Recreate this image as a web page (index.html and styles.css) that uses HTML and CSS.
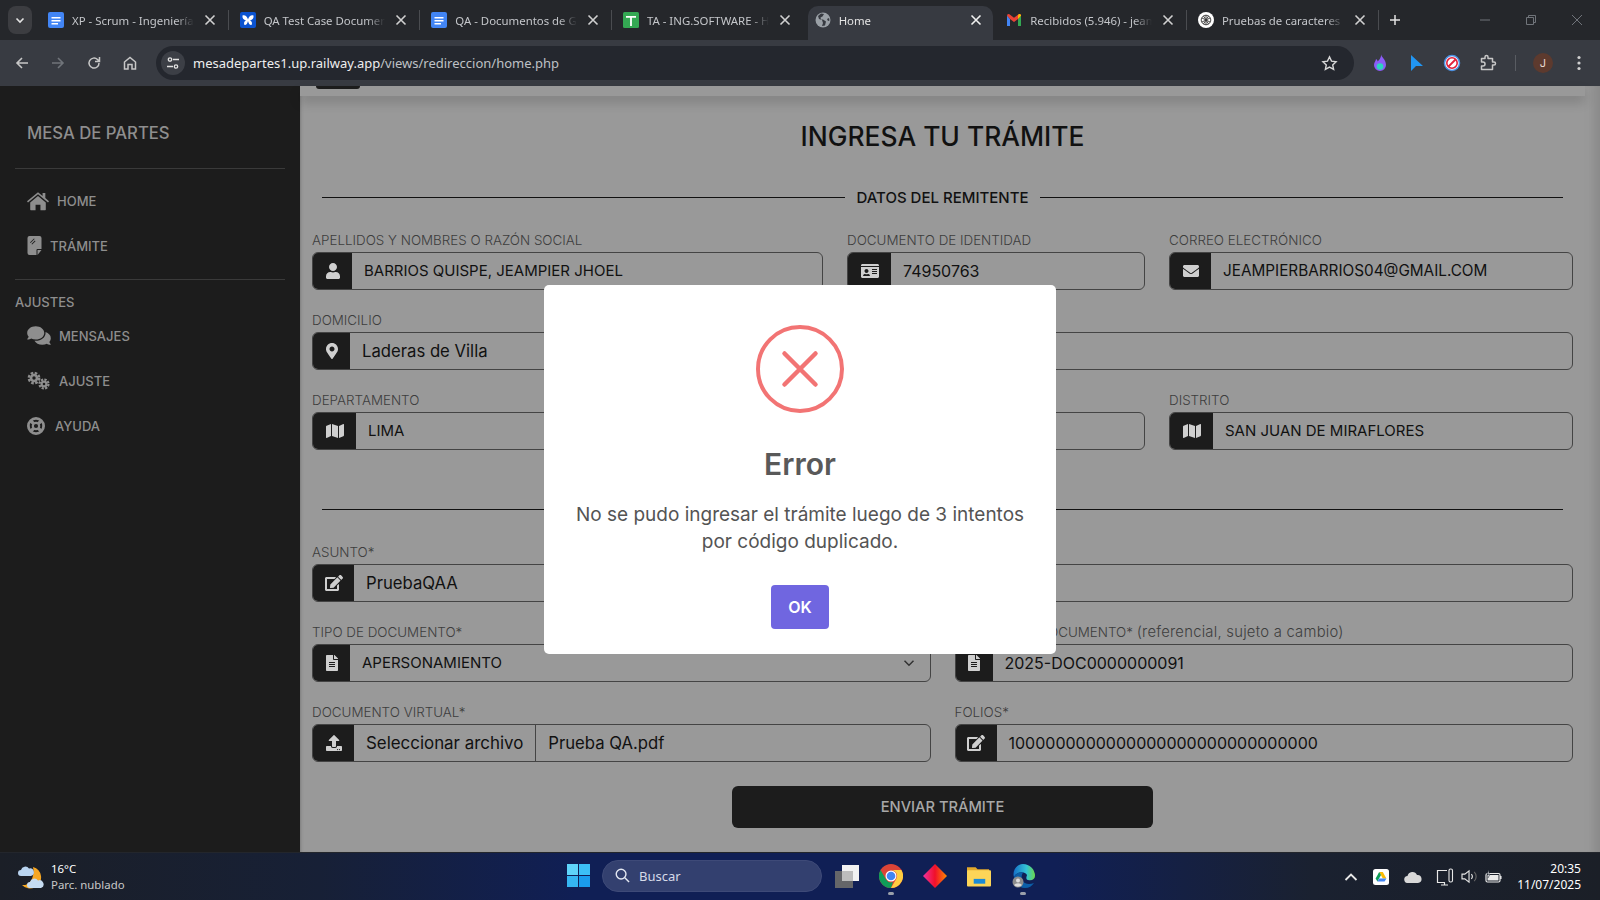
FILE: index.html
```html
<!DOCTYPE html>
<html lang="es">
<head>
<meta charset="utf-8">
<title>Home</title>
<link rel="stylesheet" href="styles.css">
</head>
<body>
<svg class="sprite" aria-hidden="true">
  <symbol id="i-home" viewBox="0 0 576 512"><path d="M288 24L408 122V44h72v136l96 82-26 30-262-216L26 292 0 262zM84 292L288 122l204 170v188a16 16 0 0 1-16 16H352V352H224v144H100a16 16 0 0 1-16-16z"/></symbol>
  <symbol id="i-note" viewBox="0 0 14 19"><path fill-rule="evenodd" d="M2 0h10a2 2 0 0 1 2 2v11h-4a1 1 0 0 0-1 1v5H2a2 2 0 0 1-2-2V2a2 2 0 0 1 2-2zM2.5 6.500l.6.6 4-4-.6-.6zM4 8l.6.6 3.400-3.400-.6-.6z"/><path d="M14 14l-4 5v-5z"/></symbol>
  <symbol id="i-comments" viewBox="0 0 576 512"><path d="M416 192c0-88.400-93.100-160-208-160S0 103.600 0 192c0 34.300 14.100 65.900 38 92-13.400 30.200-35.500 54.200-35.800 54.500-2.200 2.300-2.800 5.700-1.500 8.700S4.800 352 8 352c36.600 0 66.900-12.300 88.700-25 32.200 15.700 70.300 25 111.300 25 114.900 0 208-71.600 208-160zm122 220c23.900-26 38-57.700 38-92 0-66.900-53.500-124.200-129.300-148.100.9 6.600 1.300 13.300 1.300 20.100 0 105.900-107.700 192-240 192-10.800 0-21.300-.8-31.700-1.900C207.800 439.600 281.800 480 368 480c41 0 79.100-9.200 111.300-25 21.800 12.700 52.100 25 88.700 25 3.200 0 6.100-1.900 7.300-4.800 1.300-2.900.7-6.300-1.500-8.700-.3-.3-22.400-24.200-35.800-54.500z"/></symbol>
  <symbol id="i-cogs" viewBox="0 0 23 19"><g fill="none" stroke="currentColor"><circle cx="7" cy="7" r="3" stroke-width="2.600"/><circle cx="7" cy="7" r="5.200" stroke-width="2.400" stroke-dasharray="2.600 1.500"/><circle cx="17" cy="13" r="2.400" stroke-width="2.200"/><circle cx="17" cy="13" r="4.500" stroke-width="2.200" stroke-dasharray="2.300 1.200"/></g></symbol>
  <symbol id="i-ring" viewBox="0 0 18 18"><g fill="none" stroke="currentColor"><circle cx="9" cy="9" r="7.600" stroke-width="2.800"/><circle cx="9" cy="9" r="3.200" stroke-width="2.200"/><path stroke-width="3.400" d="M3.600 3.600l3 3M14.400 3.600l-3 3M3.600 14.400l3-3M14.400 14.400l-3-3"/></g></symbol>
  <symbol id="i-user" viewBox="0 0 448 512"><path d="M224 256c70.700 0 128-57.300 128-128S294.700 0 224 0 96 57.300 96 128s57.300 128 128 128zm89.600 32h-16.700c-22.200 10.200-46.900 16-72.900 16s-50.600-5.800-72.900-16h-16.700C60.200 288 0 348.200 0 422.400V464c0 26.500 21.500 48 48 48h352c26.500 0 48-21.500 48-48v-41.600c0-74.200-60.200-134.400-134.400-134.400z"/></symbol>
  <symbol id="i-id" viewBox="0 0 576 512"><path d="M528 32H48C21.500 32 0 53.500 0 80v16h576V80c0-26.500-21.500-48-48-48zM0 432c0 26.500 21.500 48 48 48h480c26.500 0 48-21.500 48-48V128H0v304zm352-232c0-4.400 3.600-8 8-8h144c4.400 0 8 3.600 8 8v16c0 4.400-3.600 8-8 8H360c-4.400 0-8-3.600-8-8v-16zm0 64c0-4.400 3.600-8 8-8h144c4.400 0 8 3.600 8 8v16c0 4.400-3.600 8-8 8H360c-4.400 0-8-3.600-8-8v-16zm0 64c0-4.400 3.600-8 8-8h144c4.400 0 8 3.600 8 8v16c0 4.400-3.600 8-8 8H360c-4.400 0-8-3.600-8-8v-16zM176 192c35.300 0 64 28.700 64 64s-28.700 64-64 64-64-28.700-64-64 28.700-64 64-64zM67.100 396.200C75.500 370.500 99.600 352 128 352h8.200c12.300 5.100 25.700 8 39.800 8s27.600-2.900 39.800-8h8.200c28.400 0 52.500 18.500 60.900 44.200 3.200 9.900-5.200 19.800-15.600 19.800H82.700c-10.400 0-18.800-10-15.600-19.800z"/></symbol>
  <symbol id="i-mail" viewBox="0 0 512 512"><path d="M502.300 190.800c3.900-3.100 9.700-.2 9.700 4.700V400c0 26.500-21.500 48-48 48H48c-26.500 0-48-21.500-48-48V195.600c0-5 5.700-7.800 9.700-4.700 22.400 17.400 52.100 39.500 154.100 113.600 21.100 15.400 56.700 47.800 92.200 47.600 35.700.3 72-32.800 92.300-47.600 102-74.100 131.600-96.300 154-113.700zM256 320c23.200.4 56.600-29.200 73.400-41.400 132.700-96.300 142.800-104.700 173.400-128.700 5.800-4.500 9.200-11.500 9.200-18.900v-19c0-26.500-21.500-48-48-48H48C21.500 64 0 85.500 0 112v19c0 7.400 3.400 14.300 9.200 18.900 30.600 23.900 40.700 32.400 173.400 128.700 16.800 12.200 50.200 41.800 73.400 41.400z"/></symbol>
  <symbol id="i-pin" viewBox="0 0 384 512"><path d="M172.268 501.670C26.970 291.031 0 269.413 0 192 0 85.961 85.961 0 192 0s192 85.961 192 192c0 77.413-26.970 99.031-172.268 309.670-9.535 13.774-29.930 13.773-39.464 0zM192 272c44.183 0 80-35.817 80-80s-35.817-80-80-80-80 35.817-80 80 35.817 80 80 80z"/></symbol>
  <symbol id="i-map" viewBox="0 0 576 512"><path d="M0 117.660v346.320c0 11.320 11.430 19.060 21.940 14.860L160 416V32L20.120 87.950A32.006 32.006 0 0 0 0 117.660zM192 416l192 64V96L192 32v384zM554.060 33.160L416 96v384l139.880-55.950A31.996 31.996 0 0 0 576 394.340V48.020c0-11.320-11.430-19.060-21.940-14.860z"/></symbol>
  <symbol id="i-edit" viewBox="0 0 576 512"><path d="M402.600 83.200l90.200 90.200c3.800 3.800 3.800 10 0 13.800L274.400 405.600l-92.800 10.300c-12.400 1.400-22.900-9.100-21.500-21.500l10.300-92.800L388.800 83.200c3.800-3.800 10-3.800 13.800 0zm162-22.900l-48.800-48.800c-15.200-15.200-39.900-15.200-55.200 0l-35.400 35.400c-3.800 3.800-3.800 10 0 13.800l90.200 90.200c3.800 3.800 10 3.800 13.800 0l35.400-35.400c15.200-15.300 15.200-40 0-55.200zM384 346.200V448H64V128h229.800c3.200 0 6.200-1.300 8.500-3.500l40-40c7.600-7.600 2.200-20.500-8.500-20.500H48C21.500 64 0 85.500 0 112v352c0 26.500 21.500 48 48 48h352c26.500 0 48-21.500 48-48V306.200c0-10.700-12.900-16-20.500-8.500l-40 40c-2.200 2.300-3.500 5.300-3.500 8.500z"/></symbol>
  <symbol id="i-file" viewBox="0 0 384 512"><path d="M224 136V0H24C10.700 0 0 10.700 0 24v464c0 13.300 10.700 24 24 24h336c13.300 0 24-10.700 24-24V160H248c-13.200 0-24-10.800-24-24zm64 236c0 6.600-5.400 12-12 12H108c-6.600 0-12-5.400-12-12v-8c0-6.600 5.400-12 12-12h168c6.600 0 12 5.400 12 12v8zm0-64c0 6.600-5.400 12-12 12H108c-6.600 0-12-5.400-12-12v-8c0-6.600 5.400-12 12-12h168c6.600 0 12 5.400 12 12v8zm0-72v8c0 6.600-5.400 12-12 12H108c-6.600 0-12-5.400-12-12v-8c0-6.600 5.400-12 12-12h168c6.600 0 12 5.400 12 12zm96-114.100v6.100H256V0h6.100c6.400 0 12.500 2.500 17 7l97.900 98c4.500 4.500 7 10.600 7 16.900z"/></symbol>
  <symbol id="i-upload" viewBox="0 0 512 512"><path d="M296 384h-80c-13.300 0-24-10.700-24-24V192h-87.700c-17.800 0-26.700-21.500-14.100-34.100L242.300 5.700c7.500-7.500 19.800-7.500 27.300 0l152.200 152.200c12.600 12.600 3.700 34.100-14.100 34.100H320v168c0 13.300-10.700 24-24 24zm216-8v112c0 13.300-10.700 24-24 24H24c-13.300 0-24-10.700-24-24V376c0-13.300 10.700-24 24-24h136v8c0 30.900 25.100 56 56 56h80c30.900 0 56-25.100 56-56v-8h136c13.300 0 24 10.700 24 24zm-124 88c0-11-9-20-20-20s-20 9-20 20 9 20 20 20 20-9 20-20zm64 0c0-11-9-20-20-20s-20 9-20 20 9 20 20 20 20-9 20-20z"/></symbol>
  <symbol id="t-x" viewBox="0 0 16 16"><path d="M3.500 3.500l9 9M12.500 3.500l-9 9" fill="none" stroke="currentColor" stroke-width="1.600"/></symbol>
  <symbol id="f-doc" viewBox="0 0 16 16"><rect width="16" height="16" rx="2" fill="#4285f4"/><path d="M3.500 5h9v1.400h-9zM3.500 8h9v1.400h-9zM3.500 11h6.500v1.400H3.500z" fill="#fff"/></symbol>
</svg>

<header class="tabstrip">
  <button class="tab-menu"><svg class="ico-10" viewBox="0 0 10 10"><path d="M1.500 3.500L5 7l3.500-3.500" fill="none" stroke="#e3e3e3" stroke-width="1.600"/></svg></button>
  <div class="tabs">
    <div class="tab sep"><svg class="fav"><use href="#f-doc"/></svg><span class="tab-title">XP - Scrum - Ingeniería de Software</span><svg class="tab-x"><use href="#t-x"/></svg></div>
    <div class="tab sep"><svg class="fav" viewBox="0 0 16 16"><rect width="16" height="16" rx="2" fill="#0b53d0"/><path d="M2.500 3.500C5 2.500 7.500 5 8 7.500 8.500 5 11 2.500 13.500 3.500c.5 2.500-1 4.500-3.500 5 2 .5 2.500 3 1.500 4.500-1.500.5-3-1.500-3.500-4-.5 2.500-2 4.500-3.500 4-1-1.500-.5-4 1.500-4.500-2.500-.5-4-2.500-3.500-5z" fill="#fff"/></svg><span class="tab-title">QA Test Case Document</span><svg class="tab-x"><use href="#t-x"/></svg></div>
    <div class="tab sep"><svg class="fav"><use href="#f-doc"/></svg><span class="tab-title">QA - Documentos de Google</span><svg class="tab-x"><use href="#t-x"/></svg></div>
    <div class="tab"><svg class="fav" viewBox="0 0 16 16"><rect width="16" height="16" rx="1.500" fill="#34a853"/><path d="M3 4h10v1.800H8.900V14H7.100V5.800H3z" fill="#fff"/></svg><span class="tab-title">TA - ING.SOFTWARE - Hojas</span><svg class="tab-x"><use href="#t-x"/></svg></div>
    <div class="tab tab-active"><svg class="fav" viewBox="0 0 16 16"><circle cx="8" cy="8" r="7.500" fill="#9aa0a6"/><path d="M6 1.500L3 4l1 3 3 1 1 3-1 3 3-.5 1-4-3-2-2 0-.5-2 2-1 1.500-2.500zM14 6l-2 1 1 2 1.500-.5z" fill="#373a41"/></svg><span class="tab-title tab-title-on">Home</span><svg class="tab-x tab-x-on"><use href="#t-x"/></svg></div>
    <div class="tab sep"><svg class="fav" viewBox="0 0 16 16"><path d="M1 3.500V14h3V7z" fill="#4285f4"/><path d="M12 14h3V3.500L12 7z" fill="#34a853"/><path d="M1 3.500a1.500 1.500 0 0 1 2.400-1.200L8 5.800l4.600-3.500A1.500 1.500 0 0 1 15 3.500L12 7 8 10 4 7z" fill="#ea4335"/><path d="M12 3.800V7l3-3.200a1.500 1.500 0 0 0-2.400-1.500z" fill="#fbbc04"/></svg><span class="tab-title">Recibidos (5.946) - jeampier</span><svg class="tab-x"><use href="#t-x"/></svg></div>
    <div class="tab sep"><svg class="fav" viewBox="0 0 16 16"><circle cx="8" cy="8" r="8" fill="#fff"/><g fill="none" stroke="#333" stroke-width=".9"><circle cx="8" cy="8" r="4.800"/><path d="M4 6l8 4M12 6l-8 4M8 3.200v9.600M5.500 4l5 8M10.500 4l-5 8"/></g></svg><span class="tab-title">Pruebas de caracteres</span><svg class="tab-x"><use href="#t-x"/></svg></div>
  </div>
  <svg class="plus" viewBox="0 0 12 12"><path d="M6 1v10M1 6h10" stroke="#e3e3e3" stroke-width="1.500"/></svg>
  <div class="winctl">
    <svg class="win-ic" viewBox="0 0 12 12"><path d="M1 6h10" stroke="#70747a"/></svg>
    <svg class="win-ic" viewBox="0 0 12 12"><path d="M1.500 3.500h7v7h-7zM3.500 3.500v-2h7v7h-2" fill="none" stroke="#70747a"/></svg>
    <svg class="win-ic" viewBox="0 0 12 12"><path d="M1 1l10 10M11 1L1 11" stroke="#70747a"/></svg>
  </div>
</header>

<nav class="toolbar">
  <svg class="tb-ic" viewBox="0 0 16 16"><path d="M14 8H3M8 3L3 8l5 5" fill="none" stroke="#c7c7c7" stroke-width="1.600"/></svg>
  <svg class="tb-ic" viewBox="0 0 16 16"><path d="M2 8h11M8 3l5 5-5 5" fill="none" stroke="#70747a" stroke-width="1.600"/></svg>
  <svg class="tb-ic" viewBox="0 0 16 16"><path d="M13 8a5 5 0 1 1-1.500-3.500L13.500 6.500M13.500 2v4.500H9" fill="none" stroke="#c7c7c7" stroke-width="1.500"/></svg>
  <svg class="tb-ic" viewBox="0 0 16 16"><path d="M2.500 7L8 2.500 13.500 7v7H10V9.500H6V14H2.500z" fill="none" stroke="#c7c7c7" stroke-width="1.500"/></svg>
  <div class="omnibox">
    <span class="tune"><svg class="ico-14" viewBox="0 0 14 14"><g fill="none" stroke="#e3e3e3" stroke-width="1.300"><circle cx="4" cy="3.500" r="1.700"/><path d="M7 3.500h6M1 10.500h6"/><circle cx="10" cy="10.500" r="1.700"/></g></svg></span>
    <span class="url"><span class="url-host">mesadepartes1.up.railway.app</span>/views/redireccion/home.php</span>
    <svg class="star" viewBox="0 0 16 16"><path d="M8 1.800l1.900 4 4.300.5-3.200 3 .9 4.300L8 11.400l-3.900 2.200.9-4.300-3.200-3 4.300-.5z" fill="none" stroke="#d8d8d8" stroke-width="1.300"/></svg>
  </div>
  <div class="ext">
    <svg class="ext-ic" viewBox="0 0 18 18"><path d="M10 0c0 3 5 5 5 11a6 6 0 0 1-12 0c0-3 2-4 2-6 1 .5 1.500 1.500 1.700 2.500C8.500 6 10.500 3 10 0z" fill="#8b5cf6"/><circle cx="9" cy="12.500" r="3.300" fill="#2dd4bf"/></svg>
    <svg class="ext-ic" viewBox="0 0 18 18"><path d="M4 1l12 11H9l-5 5z" fill="#2196f3"/></svg>
    <svg class="ext-ic" viewBox="0 0 18 18"><circle cx="9" cy="9" r="7.500" fill="#fff" stroke="#4a8fe0" stroke-width="1.500"/><circle cx="9" cy="9" r="5.200" fill="none" stroke="#e0203a" stroke-width="1.600"/><path d="M5.500 12.500l7-7" stroke="#e0203a" stroke-width="1.800"/></svg>
    <svg class="ext-ic" viewBox="0 0 18 18"><path d="M2.500 4.500H6V3a1.500 1.500 0 0 1 3 0v1.500h4.500V8H15a1.500 1.500 0 0 1 0 3h-1.500v4.500h-11V12H4a2 2 0 0 0 0-4H2.500z" fill="none" stroke="#c7c7c7" stroke-width="1.500" stroke-linejoin="round"/></svg>
    <span class="ext-sep"></span>
    <span class="avatar">J</span>
    <svg class="ext-ic" viewBox="0 0 18 18"><g fill="#d0d0d0"><circle cx="9" cy="3.500" r="1.600"/><circle cx="9" cy="9" r="1.600"/><circle cx="9" cy="14.500" r="1.600"/></g></svg>
  </div>
</nav>

<div class="page">
  <aside class="sidebar">
    <div class="brand">MESA DE PARTES</div>
    <hr class="side-line">
    <a class="nav-item nav-home"><svg class="n-home"><use href="#i-home"/></svg>HOME</a>
    <a class="nav-item nav-tram"><svg class="n-note"><use href="#i-note"/></svg>TRÁMITE</a>
    <hr class="side-line side-line-2">
    <div class="side-head">AJUSTES</div>
    <a class="nav-item nav-msg"><svg class="n-msg"><use href="#i-comments"/></svg>MENSAJES</a>
    <a class="nav-item nav-cog"><svg class="n-cog"><use href="#i-cogs"/></svg>AJUSTE</a>
    <a class="nav-item nav-help"><svg class="n-ring"><use href="#i-ring"/></svg>AYUDA</a>
  </aside>

  <main class="main">
    <div class="topbar"><span class="topbar-btn"></span></div>
    <h1 class="title">INGRESA TU TRÁMITE</h1>

    <div class="section"><span>DATOS DEL REMITENTE</span></div>
    <div class="row">
      <div class="field c-511"><label>APELLIDOS Y NOMBRES O RAZÓN SOCIAL</label><div class="group"><span class="addon b-39"><svg class="g-user"><use href="#i-user"/></svg></span><span class="val up">BARRIOS QUISPE, JEAMPIER JHOEL</span></div></div>
      <div class="field c-298"><label>DOCUMENTO DE IDENTIDAD</label><div class="group"><span class="addon b-43"><svg class="g-wide"><use href="#i-id"/></svg></span><span class="val">74950763</span></div></div>
      <div class="field c-fill"><label>CORREO ELECTRÓNICO</label><div class="group"><span class="addon b-41"><svg class="g-mail"><use href="#i-mail"/></svg></span><span class="val up-mail">JEAMPIERBARRIOS04@GMAIL.COM</span></div></div>
    </div>
    <div class="row">
      <div class="field c-fill"><label>DOMICILIO</label><div class="group"><span class="addon b-37"><svg class="g-pin"><use href="#i-pin"/></svg></span><span class="val low">Laderas de Villa</span></div></div>
    </div>
    <div class="row row-last">
      <div class="field c-416"><label>DEPARTAMENTO</label><div class="group"><span class="addon b-43"><svg class="g-wide"><use href="#i-map"/></svg></span><span class="val up">LIMA</span></div></div>
      <div class="field c-393"><label>PROVINCIA</label><div class="group"><span class="addon b-43"><svg class="g-wide"><use href="#i-map"/></svg></span><span class="val up">LIMA</span></div></div>
      <div class="field c-fill"><label>DISTRITO</label><div class="group"><span class="addon b-43"><svg class="g-wide"><use href="#i-map"/></svg></span><span class="val up">SAN JUAN DE MIRAFLORES</span></div></div>
    </div>

    <div class="section"></div>
    <div class="row">
      <div class="field c-fill"><label>ASUNTO*</label><div class="group"><span class="addon b-41"><svg class="g-edit"><use href="#i-edit"/></svg></span><span class="val low">PruebaQAA</span></div></div>
    </div>
    <div class="row">
      <div class="field c-half"><label>TIPO DE DOCUMENTO*</label><div class="group"><span class="addon b-37"><svg class="g-file"><use href="#i-file"/></svg></span><span class="val val-grow up">APERSONAMIENTO</span><svg class="chev" viewBox="0 0 16 16"><path d="M2 5l6 6 6-6" fill="none" stroke="#333" stroke-width="2"/></svg></div></div>
      <div class="field c-half"><label>NÚMERO DE DOCUMENTO* <span class="lbl-low">(referencial, sujeto a cambio)</span></label><div class="group"><span class="addon b-37"><svg class="g-file"><use href="#i-file"/></svg></span><span class="val">2025-DOC0000000091</span></div></div>
    </div>
    <div class="row row-end">
      <div class="field c-half"><label>DOCUMENTO VIRTUAL*</label><div class="group"><span class="addon b-41"><svg class="g-up"><use href="#i-upload"/></svg></span><span class="file-btn">Seleccionar archivo</span><span class="val low">Prueba QA.pdf</span></div></div>
      <div class="field c-half"><label>FOLIOS*</label><div class="group"><span class="addon b-41"><svg class="g-edit"><use href="#i-edit"/></svg></span><span class="val">1000000000000000000000000000000</span></div></div>
    </div>
    <div class="actions"><button class="send">ENVIAR TRÁMITE</button></div>
  </main>

  <div class="overlay">
    <div class="modal" role="dialog">
      <svg class="err" viewBox="0 0 88 88"><circle cx="44" cy="44" r="42" fill="none" stroke="#f27474" stroke-width="4"/><path d="M28.500 28.500l31 31M59.500 28.500l-31 31" stroke="#f27474" stroke-width="4.500" stroke-linecap="round"/></svg>
      <h2 class="m-title">Error</h2>
      <p class="m-text">No se pudo ingresar el trámite luego de 3 intentos<br>por código duplicado.</p>
      <button class="m-ok">OK</button>
    </div>
  </div>
</div>

<footer class="taskbar">
  <div class="weather">
    <svg class="w-ic" viewBox="0 0 26 26"><path d="M15 3a11 11 0 0 1 8 9 11 11 0 0 1-19 9c8 1 13-8 11-18z" fill="#f5a623"/><path d="M3 12a3 3 0 0 1 0-6 4.500 4.500 0 0 1 8-1.500A3.500 3.500 0 0 1 13 12z" fill="#b9d4f0"/><path d="M12 24a3 3 0 0 1 0-6 4.500 4.500 0 0 1 8-1.500A3.800 3.800 0 0 1 23 24z" fill="#c6dcf2"/></svg>
    <div class="w-txt"><div class="w-t">16°C</div><div class="w-s">Parc. nublado</div></div>
  </div>
  <div class="center">
    <svg class="win" viewBox="0 0 23 23"><rect width="11" height="11" fill="#5fd4fa"/><rect x="12" width="11" height="11" fill="#3cc0f6"/><rect y="12" width="11" height="11" fill="#35b6f2"/><rect x="12" y="12" width="11" height="11" fill="#1a9cec"/></svg>
    <div class="search"><svg class="s-ic" viewBox="0 0 16 16"><circle cx="6.500" cy="6.500" r="5.200" fill="none" stroke="#e4e8f2" stroke-width="1.500"/><path d="M10.500 10.500L15 15" stroke="#e4e8f2" stroke-width="1.500"/></svg><span>Buscar</span></div>
    <svg class="tk tk-gap" viewBox="0 0 24 24"><rect x="7" y="1" width="17" height="16" fill="#f2f2f2"/><rect x="0" y="7" width="18" height="17" fill="#6a6a6a" opacity=".95"/><rect x="7" y="7" width="11" height="10" fill="#bdbdbd"/></svg>
    <span class="tk-wrap"><svg class="tk" viewBox="0 0 24 24"><circle cx="12" cy="12" r="12" fill="#db4437"/><path d="M12 24A12 12 0 0 1 1.600 6L7 15.500a6 6 0 0 0 7 2.500z" fill="#0f9d58"/><path d="M12 6h10.400A12 12 0 0 1 12 24l5.200-9a6 6 0 0 0-5.200-9z" fill="#ffcd40"/><circle cx="12" cy="12" r="5.500" fill="#fff"/><circle cx="12" cy="12" r="4.300" fill="#4285f4"/></svg><i class="run"></i></span>
    <svg class="tk tk-gap" viewBox="0 0 24 24"><defs><linearGradient id="dg" x1="0" x2="1"><stop offset="0" stop-color="#f032a0"/><stop offset=".5" stop-color="#f0102a"/><stop offset="1" stop-color="#ff8a00"/></linearGradient></defs><path d="M12 0l12 12-12 12L0 12z" fill="url(#dg)"/></svg>
    <svg class="tk tk-gap" viewBox="0 0 25 24"><path d="M0 3h9l2 2h12v4H0z" fill="#e2a92c"/><rect y="6" width="25" height="17" rx="1" fill="#fcd558"/><rect x="7" y="15" width="12" height="5" fill="#1a8ad6"/></svg>
    <span class="tk-wrap"><svg class="tk" viewBox="0 0 24 24"><defs><linearGradient id="eg" x1="0" x2="1"><stop offset="0" stop-color="#1670c8"/><stop offset=".6" stop-color="#33c3d6"/><stop offset="1" stop-color="#6ad84d"/></linearGradient></defs><path d="M12 0a12 12 0 0 1 12 12c0 3-3 5-7 4-3-1-1-4-1-5-2-4-10-4-13 2C1 8 5 0 12 0z" fill="url(#eg)"/><path d="M3 13c-1 6 5 11 11 11 4 0 7-2 9-5-5 2-10 1-12-3-1-3 0-7 2-8-5 0-9 2-10 5z" fill="#0b5ea8"/><circle cx="7" cy="18" r="5.500" fill="#8c8c8c"/><circle cx="7" cy="16.500" r="2" fill="#ddd"/><path d="M3 21a4.500 3 0 0 1 8 0 5.500 5.500 0 0 1-8 0z" fill="#ddd"/></svg><i class="run"></i></span>
  </div>
  <div class="tray">
    <svg class="tr-chev" viewBox="0 0 14 14"><path d="M1.500 10L7 4.500 12.500 10" fill="none" stroke="#e8e8e8" stroke-width="1.800"/></svg>
    <svg class="tr-drive" viewBox="0 0 16 16"><rect width="16" height="16" rx="2.500" fill="#fff"/><path d="M6.200 3h3.600l3.600 6.500h-3.600z" fill="#fbbc04"/><path d="M6.200 3L2.600 9.500l1.800 3 3.600-6.500z" fill="#0f9d58"/><path d="M4.400 12.500h7.200l1.800-3H6.200z" fill="#4285f4"/></svg>
    <svg class="tr-cloud" viewBox="0 0 18 12"><path d="M4 12a3.500 3.500 0 0 1-.5-7A5 5 0 0 1 13 4a4 4 0 0 1 1 8z" fill="#d8d8d8"/></svg>
    <svg class="tr-net" viewBox="0 0 18 18"><path d="M9 14.500H1.500v-12H11M5 17h7M8.500 14.500V17" fill="none" stroke="#e8e8e8" stroke-width="1.200"/><rect x="13" y="1" width="3.500" height="13" rx="1.500" fill="none" stroke="#e8e8e8" stroke-width="1.100"/></svg>
    <svg class="tr-vol" viewBox="0 0 18 16"><path d="M1 5.500h3L8.500 2v12L4 10.500H1z" fill="none" stroke="#e8e8e8" stroke-width="1.200"/><path d="M11 5.500a3.500 3.500 0 0 1 0 5" fill="none" stroke="#e8e8e8" stroke-width="1.200"/><path d="M14 3a7 7 0 0 1 0 10" fill="none" stroke="#666" stroke-width="1.200"/></svg>
    <svg class="tr-bat" viewBox="0 0 18 14"><rect x="1" y="3.500" width="14" height="8.500" rx="1.500" fill="none" stroke="#e8e8e8" stroke-width="1.200"/><rect x="2.500" y="5" width="11" height="5.500" fill="#e8e8e8"/><path d="M15.800 6v3" stroke="#e8e8e8" stroke-width="1.500"/><path d="M4 0l-2 4h3L3 8" fill="#e8e8e8" stroke="#1a2130" stroke-width=".6"/></svg>
    <div class="clock"><div>20:35</div><div>11/07/2025</div></div>
  </div>
</footer>
</body>
</html>
```
FILE: styles.css
```css
* { box-sizing: border-box; }
html, body { margin: 0; height: 100%; }
body {
  width: 1600px; height: 900px; overflow: hidden;
  display: flex; flex-direction: column;
  font-family: "Inter", "Noto Sans", sans-serif;
  background: #999;
}
.sprite { display: none; }
svg { display: block; flex: none; fill: currentColor; }

/* browser chrome */
.tabstrip {
  height: 40px; flex: none; display: flex; align-items: flex-start;
  background: #25272b; color: #c7c7c7;
  font-family: "Noto Sans", sans-serif; font-size: 11.4px;
}
.tab-menu {
  width: 24px; height: 28px; margin: 6px 7px 0 8px; padding: 0; border: 0; border-radius: 8px;
  background: #3c3d41; display: flex; align-items: center; justify-content: center;
}
.ico-10 { width: 10px; height: 10px; }
.tabs { display: flex; margin-left: 1px; }
.tab {
  position: relative; width: 191.67px; height: 34px; margin-top: 6px;
  display: flex; align-items: center; gap: 8px; padding: 0 14px 6px 8px;
}
.tab.sep::after {
  content: ""; position: absolute; right: 3px; top: 4px; width: 1px; height: 20px; background: #4a4c50;
}
.tab-active::before {
  content: ""; position: absolute; inset: 0 5px 0 1px; background: #373a41; border-radius: 10px 10px 0 0;
}
.fav, .tab-x, .tab-title { position: relative; }
.fav { width: 16px; height: 16px; }
.tab-title {
  flex: 1; min-width: 0; white-space: nowrap; overflow: hidden; color: #c4c6ca;
  -webkit-mask-image: linear-gradient(90deg, #000 85%, transparent);
  mask-image: linear-gradient(90deg, #000 85%, transparent);
}
.tab-title-on { color: #e3e3e3; }
.tab-x { width: 16px; height: 16px; color: #d0d0d0; }
.tab-x-on { color: #f0f0f0; }
.plus { width: 12px; height: 12px; margin: 14px 0 0 7px; }
.winctl { margin-left: auto; display: flex; gap: 34px; margin-top: 14px; margin-right: 17px; }
.win-ic { width: 12px; height: 12px; }

.toolbar {
  height: 46px; flex: none; display: flex; align-items: center;
  background: #383b42; padding-left: 14px;
}
.tb-ic { width: 16px; height: 16px; margin-right: 20px; }
.omnibox {
  width: 1198px; height: 34px; margin-left: -2px; border-radius: 17px; background: #24272e;
  display: flex; align-items: center; padding: 0 16px 0 5px;
  font-family: "Noto Sans", sans-serif; font-size: 13px; color: #bfc1c5;
}
.tune {
  width: 24px; height: 24px; border-radius: 50%; background: #3c3f46;
  display: flex; align-items: center; justify-content: center; margin-right: 8px;
}
.ico-14 { width: 14px; height: 14px; }
.url { flex: 1; }
.url-host { color: #eee; }
.star { width: 17px; height: 17px; }
.ext { display: flex; align-items: center; gap: 18px; margin-left: 17px; }
.ext-ic { width: 18px; height: 18px; }
.ext-sep { width: 1px; height: 16px; background: #595c62; margin: 0 -1px 0 0; }
.avatar {
  width: 20px; height: 20px; border-radius: 50%; background: #5d3a2e; color: #e8d8d0;
  display: flex; align-items: center; justify-content: center; font-size: 11px; margin-right: -1px;
}

/* page */
.page { flex: 1; min-height: 0; display: flex; position: relative; }
.sidebar { width: 300px; flex: none; background: #1c1c1c; color: #8e8e8e; padding: 0 15px; }
.brand { font-size: 16.7px; font-weight: 500; line-height: 28px; margin: 33px 0 21px 12px; white-space: nowrap; }
.side-line { border: 0; height: 1px; background: #3a3a3a; margin: 0; }
.side-line-2 { margin-top: 11px; }
.side-head { font-size: 13px; font-weight: 500; line-height: 20px; margin-top: 12px; }
.nav-item {
  display: flex; align-items: center; height: 45px; margin-left: 12px;
  font-size: 13px; font-weight: 500; white-space: nowrap;
}
.nav-home { margin-top: 9px; }
.nav-msg { margin-top: 1px; }
.n-home { width: 22px; height: 20px; margin-right: 8px; }
.n-note { width: 15px; height: 19px; margin-right: 8px; }
.n-msg { width: 24px; height: 21px; margin-right: 8px; }
.n-cog { width: 23px; height: 19px; margin-right: 9px; }
.n-ring { width: 18px; height: 18px; margin-right: 10px; }

.main {
  flex: 1; min-width: 0; background: #999; padding: 0 27px 0 12px; color: #111;
  box-shadow: inset 3px 0 3px -2px #7c7c7c, inset -14px 0 8px -8px #8a8a8a;
}
.topbar {
  height: 10px; margin: 0 -12px; position: relative; background: #999;
  box-shadow: 0 6px 12px rgba(0,0,0,.18);
}
.topbar-btn { display: block; width: 44px; height: 3px; margin-left: 16px; background: #1c1c1c; border-radius: 0 0 4px 4px; }
.title { margin: 19px 0 28px; text-align: center; font-size: 26.4px; font-weight: 500; line-height: 42px; color: #111; }
.section {
  display: flex; align-items: center; gap: 11px; padding: 0 10px; height: 24px; margin-bottom: 22px;
  font-size: 15px; font-weight: 500; color: #111; white-space: nowrap;
}
.section::before, .section::after { content: ""; flex: 1; height: 1px; background: #111; }
.row { display: flex; gap: 24px; margin-bottom: 21px; }
.row-last { margin-bottom: 47px; }
.row-end { margin-bottom: 24px; }
.field { min-width: 0; }
.c-511 { flex: 0 0 511px; }
.c-298 { flex: 0 0 298px; }
.c-416 { flex: 0 0 416px; }
.c-393 { flex: 0 0 393px; }
.c-fill { flex: 1; }
.c-half { flex: 1 1 0; }
label { display: block; height: 21px; line-height: 19px; font-size: 13.4px; font-weight: 300; color: #3d3d3d; white-space: nowrap; }
.lbl-low { font-size: 14.8px; letter-spacing: .25px; }
.group {
  height: 38px; display: flex; align-items: center; border: 1px solid #444; border-radius: 6px;
  font-size: 16px; color: #111; overflow: hidden;
}
.addon {
  height: 100%; flex: none; display: flex; align-items: center; justify-content: center;
  background: #1c1c1c; color: #cfcfcf;
}
.b-37 { width: 37px; } .b-39 { width: 39px; } .b-41 { width: 41px; } .b-43 { width: 43px; }
.val { padding: 0 12px 1px; white-space: nowrap; }
.up { font-size: 15px; }
.up-mail { font-size: 15.3px; }
.low { font-size: 16.7px; }
.val-grow { flex: 1; }
.chev { width: 12px; height: 12px; margin-right: 15px; }
.file-btn { padding: 0 12px 1px; height: 100%; display: flex; align-items: center; border-right: 1px solid #444; white-space: nowrap; font-size: 16.9px; }
.g-user { width: 14px; height: 16px; }
.g-wide { width: 18px; height: 16px; }
.g-mail { width: 16px; height: 16px; }
.g-pin { width: 12px; height: 16px; }
.g-edit { width: 18px; height: 16px; }
.g-file { width: 12px; height: 16px; }
.g-up { width: 16px; height: 16px; }
.actions { display: flex; justify-content: center; }
.send {
  width: 421px; height: 42px; border: 0; border-radius: 6px; background: #1c1c1c; color: #a8a8a8;
  font: 500 14.7px "Inter", sans-serif;
}

/* modal */
.overlay { position: absolute; inset: 0; display: flex; align-items: center; justify-content: center; }
.modal {
  width: 512px; height: 369px; background: #fff; border-radius: 5px; padding-top: 40px;
  display: flex; flex-direction: column; align-items: center;
}
.err { width: 88px; height: 88px; }
.m-title { margin: 33px 0 0; font-size: 30px; line-height: 36px; font-weight: 600; color: #595959; }
.m-text { margin: 19px 0 0; font-size: 19px; line-height: 27px; font-weight: 400; color: #545454; text-align: center; white-space: nowrap; }
.m-ok {
  margin-top: 30px; width: 58px; height: 44px; border: 0; border-radius: 4px;
  background: #7066e0; color: #fff; font: 600 16px "Inter", sans-serif;
}

/* taskbar */
.taskbar {
  height: 48px; flex: none; display: flex; align-items: center; position: relative; color: #fff;
  font-family: "Noto Sans", sans-serif; font-size: 11.4px;
  background: linear-gradient(90deg, #1b1f27 0, #172036 20%, #101f55 36%, #101f55 66%, #1a2130 82%, #1b1f27);
  border-top: 1px solid #23262c;
}
.weather { display: flex; align-items: center; gap: 7px; margin-left: 18px; width: 549px; }
.w-ic { width: 26px; height: 26px; }
.w-t { line-height: 16px; }
.w-s { line-height: 16px; color: #c8c8c8; }
.center { display: flex; align-items: center; padding-bottom: 2px; }
.win { width: 23px; height: 23px; margin-right: 12px; }
.search {
  width: 220px; height: 32px; border-radius: 16px; background: #33406f; border: 1px solid #3e4a78;
  display: flex; align-items: center; gap: 9px; padding-left: 12px; font-size: 13px; color: #d6dae8; margin-right: 13px;
}
.s-ic { width: 15px; height: 15px; }
.tk { width: 24px; height: 24px; }
.tk-gap { margin-right: 20px; }
.tk-wrap { position: relative; margin-right: 20px; display: block; }
.run { position: absolute; left: 9px; bottom: -7px; width: 6px; height: 3px; border-radius: 2px; background: #9aa0aa; }
.tray { position: absolute; right: 19px; top: 0; height: 47px; display: flex; align-items: center; }
.tr-chev { width: 14px; height: 14px; margin-right: 15px; }
.tr-drive { width: 16px; height: 16px; margin-right: 15px; }
.tr-cloud { width: 18px; height: 12px; margin-right: 14px; }
.tr-net { width: 18px; height: 18px; margin-right: 7px; }
.tr-vol { width: 17px; height: 15px; margin-right: 7px; }
.tr-bat { width: 18px; height: 14px; margin-right: 14px; }
.clock { text-align: right; line-height: 16px; font-size: 12px; }
```
